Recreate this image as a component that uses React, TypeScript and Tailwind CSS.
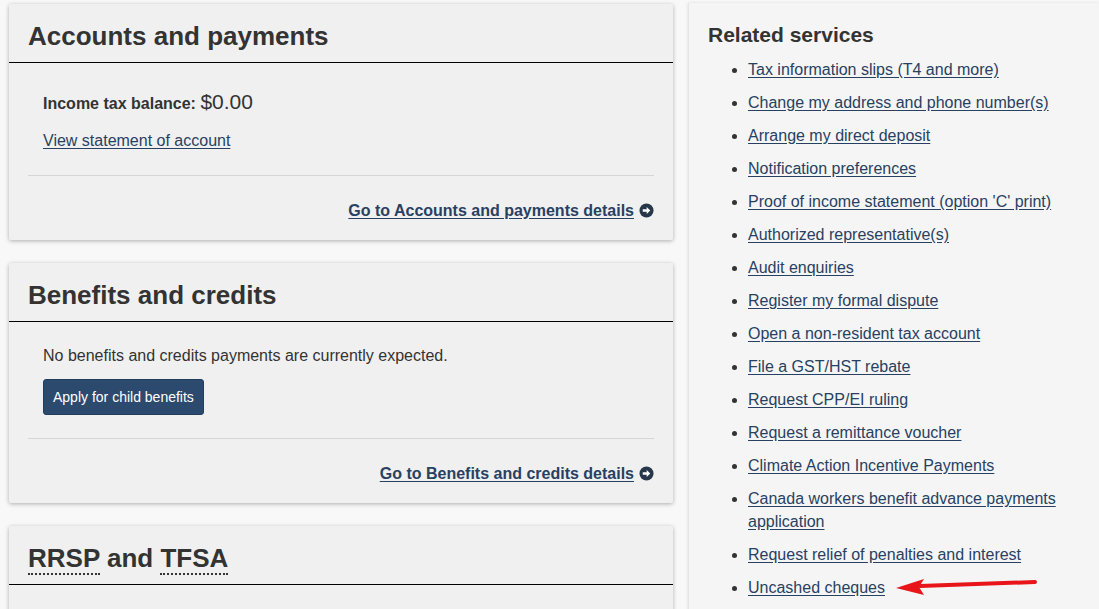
const links = [
  "Tax information slips (T4 and more)",
  "Change my address and phone number(s)",
  "Arrange my direct deposit",
  "Notification preferences",
  "Proof of income statement (option 'C' print)",
  "Authorized representative(s)",
  "Audit enquiries",
  "Register my formal dispute",
  "Open a non-resident tax account",
  "File a GST/HST rebate",
  "Request CPP/EI ruling",
  "Request a remittance voucher",
  "Climate Action Incentive Payments",
  "Canada workers benefit advance payments application",
  "Request relief of penalties and interest",
  "Uncashed cheques",
]

function CircleArrow() {
  return (
    <svg width="15" height="15" viewBox="0 0 16 16" className="inline-block ml-[5px] -mt-[3px] align-middle">
      <circle cx="8" cy="8" r="7.5" fill="#26374a" />
      <path d="M4 6.6h4.2V4.2L12 8l-3.8 3.8V9.4H4z" fill="#fff" />
    </svg>
  )
}

function DetailsLink({ label }: { label: string }) {
  return (
    <div className="text-right leading-[22px]">
      <a href="#" className="font-bold text-[16px] text-[#284162] underline underline-offset-2">
        {label}
      </a>
      <CircleArrow />
    </div>
  )
}

function CardHeader({ children }: { children: React.ReactNode }) {
  return (
    <div className="px-[19px] pt-[18px] pb-[11px] border-b border-black">
      <h2 className="text-[26px] leading-[29px] font-bold text-[#333]">{children}</h2>
    </div>
  )
}

export default function App() {
  return (
    <div
      className="relative w-[1099px] h-[609px] overflow-hidden bg-[#f8f8f8] text-[#333]"
      style={{ fontFamily: '"Liberation Sans", Arial, sans-serif' }}
    >
      <div className="flex gap-[15px] pl-[9px]">
        <div className="w-[664px] shrink-0 flex flex-col gap-[23px] pt-[4px]">
          {/* Accounts and payments */}
          <section className="bg-[#f0f0f0] shadow-[0_1px_4px_rgba(0,0,0,0.3)] rounded-[2px]">
            <CardHeader>Accounts and payments</CardHeader>
            <div className="px-[19px] pb-[18px]">
              <div className="pl-[15px] pt-[27px]">
                <p className="leading-[24px]">
                  <span className="font-bold text-[16px]">Income tax balance:</span>{" "}
                  <span className="text-[21px]">$0.00</span>
                </p>
                <a href="#" className="block mt-[14px] leading-[22px] text-[16px] text-[#284162] underline underline-offset-2">
                  View statement of account
                </a>
              </div>
              <hr className="mt-[23px] border-t border-[#d6d6d6]" />
              <div className="pt-[24px]">
                <DetailsLink label="Go to Accounts and payments details" />
              </div>
            </div>
          </section>

          {/* Benefits and credits */}
          <section className="bg-[#f0f0f0] shadow-[0_1px_4px_rgba(0,0,0,0.3)] rounded-[2px]">
            <CardHeader>Benefits and credits</CardHeader>
            <div className="px-[19px] pb-[18px]">
              <div className="pl-[15px] pt-[23px]">
                <p className="leading-[22px] text-[16px]">No benefits and credits payments are currently expected.</p>
                <button className="mt-[12px] h-[36px] px-[9px] rounded-[3px] bg-[#2b4a6e] border border-[#233d5c] text-white text-[14px]">
                  Apply for child benefits
                </button>
              </div>
              <hr className="mt-[23px] border-t border-[#d6d6d6]" />
              <div className="pt-[24px]">
                <DetailsLink label="Go to Benefits and credits details" />
              </div>
            </div>
          </section>

          {/* RRSP and TFSA */}
          <section className="bg-[#f0f0f0] shadow-[0_1px_4px_rgba(0,0,0,0.3)] rounded-[2px] h-[120px]">
            <CardHeader>
              <abbr className="no-underline border-b-2 border-dotted border-[#333]" title="Registered Retirement Savings Plan">RRSP</abbr>{" "}
              and{" "}
              <abbr className="no-underline border-b-2 border-dotted border-[#333]" title="Tax-Free Savings Account">TFSA</abbr>
            </CardHeader>
          </section>
        </div>

        {/* Related services */}
        <aside className="flex-1 mt-[3px] min-h-[620px] bg-[#f5f5f5] border-l border-[#e6e6e6] shadow-[0_0_3px_rgba(0,0,0,0.12)] pl-[19px] pr-[20px] pt-[19px]">
          <h2 className="text-[21px] leading-[26px] font-bold text-[#333]">Related services</h2>
          <ul className="mt-[10px] list-disc pl-[40px] marker:text-[#333] text-[16px]">
            {links.map((l) => (
              <li key={l} className="leading-[23px] mb-[10px]">
                <a href="#" className="text-[#284162] underline underline-offset-2">
                  {l}
                </a>
              </li>
            ))}
          </ul>
        </aside>
      </div>

      {/* annotation arrow */}
      <svg className="absolute left-[890px] top-[574px]" width="155" height="26" viewBox="0 0 155 26">
        <path d="M145 8 L30 12" stroke="#e8161b" strokeWidth="4" strokeLinecap="round" fill="none" />
        <path d="M6 14 L34 5 L29 13 L34 21 Z" fill="#e8161b" />
      </svg>
    </div>
  )
}
